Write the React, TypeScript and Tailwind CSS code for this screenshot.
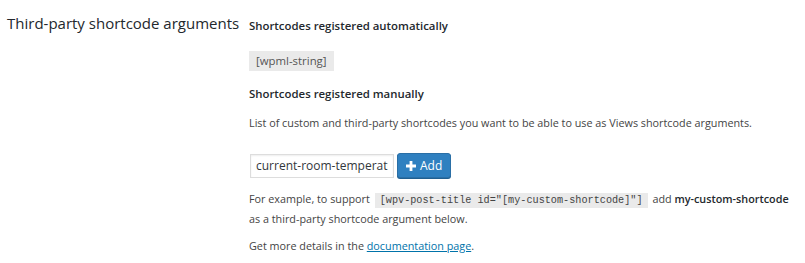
const FONT = "font-['Open_Sans',sans-serif]";

export default function App() {
  return (
    <div className={`min-h-[263px] w-[805px] bg-white text-[#444] ${FONT}`}>
      <div className="flex items-start">
        <div className="w-[249px] shrink-0 pl-[7px] pt-[13px]">
          <h2 className="text-[15px] leading-[20px] text-[#23282d]">Third-party shortcode arguments</h2>
        </div>
        <div className="flex flex-col pt-[18px] text-[10.8px]">
          <h3 className="text-[11.4px] font-semibold leading-[16px] text-[#23282d]">
            Shortcodes registered automatically
          </h3>
          <div className="mt-[17px] flex">
            <span className="bg-[#eaeaea] px-[7px] py-[2px] text-[11.4px] leading-[16px] text-[#555]">[wpml-string]</span>
          </div>
          <h3 className="mt-[15px] text-[11.4px] font-semibold leading-[16px] text-[#23282d]">
            Shortcodes registered manually
          </h3>
          <p className="mt-[13px] leading-[16px]">
            List of custom and third-party shortcodes you want to be able to use as Views shortcode arguments.
          </p>
          <div className="mt-[22px] flex items-center gap-[3px] pl-px">
            <input
              type="text"
              defaultValue="current-room-temperature"
              className="h-[24px] w-[144px] border border-[#ddd] bg-white px-[5px] text-[12px] text-[#32373c] shadow-[inset_0_1px_2px_rgba(0,0,0,0.07)] outline-none"
            />
            <button className="flex h-[25px] items-center gap-[4px] rounded-[3px] border border-[#2a6fa6] bg-[#2f80c0] px-[8px] text-[12px] text-white shadow-[0_1px_0_#1f5f91]">
              <svg width="10" height="10" viewBox="0 0 10 10" fill="white">
                <path d="M3.6 0h2.8v3.6H10v2.8H6.4V10H3.6V6.4H0V3.6h3.6z" />
              </svg>
              Add
            </button>
          </div>
          <p className="mt-[12px] leading-[18px]">
            For example, to support{" "}
            <code className="mx-[2px] bg-[#eaeaea] px-[5px] py-[2px] font-['Liberation_Mono',monospace] text-[10.2px] text-[#444]">
              [wpv-post-title id="[my-custom-shortcode]"]
            </code>{" "}
            add <strong className="font-semibold text-[#23282d]">my-custom-shortcode</strong>
            <br />
            as a third-party shortcode argument below.
          </p>
          <p className="mt-[10px] leading-[16px]">
            Get more details in the{" "}
            <a href="#" className="text-[#0073aa] underline">
              documentation page
            </a>
            .
          </p>
        </div>
      </div>
    </div>
  );
}
